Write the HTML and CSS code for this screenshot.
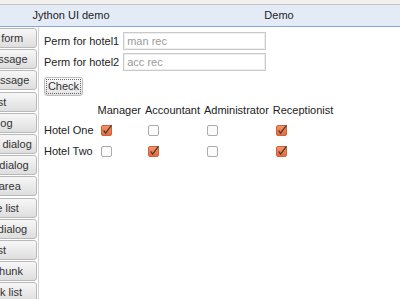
FILE: index.html
```
<!DOCTYPE html>
<html>
<head>
<meta charset="utf-8">
<link rel="stylesheet" href="styles.css">
</head>
<body>
<div class="topbar"></div>
<div class="header">
  <div class="hcell hleft">Jython UI demo</div>
  <div class="hcell hright">Demo</div>
</div>
<div class="main">
  <div class="sidebar">
    <button class="navbtn">Show simple form</button>
    <button class="navbtn">Show info message</button>
    <button class="navbtn">Show alert message</button>
    <button class="navbtn">Sample list</button>
    <button class="navbtn">Simple dialog</button>
    <button class="navbtn">Show question dialog</button>
    <button class="navbtn">Show custom dialog</button>
    <button class="navbtn">Show a text area</button>
    <button class="navbtn">Show simple list</button>
    <button class="navbtn">Show yes/no dialog</button>
    <button class="navbtn">Show a list</button>
    <button class="navbtn">Show a big chunk</button>
    <button class="navbtn">Show a check list</button>
  </div>
  <div class="content">
    <div class="formrow">
      <span class="lbl">Perm for hotel1</span>
      <input class="field" type="text" value="man rec">
    </div>
    <div class="formrow">
      <span class="lbl">Perm for hotel2</span>
      <input class="field" type="text" value="acc rec">
    </div>
    <button class="checkbtn"><span class="focusring">Check</span></button>
    <table class="grid">
      <tr class="headrow">
        <td></td><td>Manager</td><td>Accountant</td><td>Administrator</td><td>Receptionist</td>
      </tr>
      <tr class="datarow">
        <td>Hotel One</td>
        <td><svg class="cb" width="12" height="12" viewBox="0 0 12 12"><defs><linearGradient id="og" x1="0" y1="0" x2="0" y2="1"><stop offset="0" stop-color="#f5946a"/><stop offset="1" stop-color="#e8683a"/></linearGradient></defs><rect x="0.5" y="1.5" width="10" height="10" rx="1.5" fill="url(#og)" stroke="#c9643c"/><path d="M2.6 6.4 L4.6 9.2 L10.6 1.2" fill="none" stroke="#4a3b33" stroke-width="1.3"/></svg></td>
        <td><svg class="cb" width="12" height="12" viewBox="0 0 12 12"><rect x="0.5" y="1.5" width="10" height="10" rx="1.5" fill="#fbfbfb" stroke="#ababab"/></svg></td>
        <td><svg class="cb" width="12" height="12" viewBox="0 0 12 12"><rect x="0.5" y="1.5" width="10" height="10" rx="1.5" fill="#fbfbfb" stroke="#ababab"/></svg></td>
        <td><svg class="cb" width="12" height="12" viewBox="0 0 12 12"><rect x="0.5" y="1.5" width="10" height="10" rx="1.5" fill="url(#og)" stroke="#c9643c"/><path d="M2.6 6.4 L4.6 9.2 L10.6 1.2" fill="none" stroke="#4a3b33" stroke-width="1.3"/></svg></td>
      </tr>
      <tr class="datarow">
        <td>Hotel Two</td>
        <td><svg class="cb" width="12" height="12" viewBox="0 0 12 12"><rect x="0.5" y="1.5" width="10" height="10" rx="1.5" fill="#fbfbfb" stroke="#ababab"/></svg></td>
        <td><svg class="cb" width="12" height="12" viewBox="0 0 12 12"><rect x="0.5" y="1.5" width="10" height="10" rx="1.5" fill="url(#og)" stroke="#c9643c"/><path d="M2.6 6.4 L4.6 9.2 L10.6 1.2" fill="none" stroke="#4a3b33" stroke-width="1.3"/></svg></td>
        <td><svg class="cb" width="12" height="12" viewBox="0 0 12 12"><rect x="0.5" y="1.5" width="10" height="10" rx="1.5" fill="#fbfbfb" stroke="#ababab"/></svg></td>
        <td><svg class="cb" width="12" height="12" viewBox="0 0 12 12"><rect x="0.5" y="1.5" width="10" height="10" rx="1.5" fill="url(#og)" stroke="#c9643c"/><path d="M2.6 6.4 L4.6 9.2 L10.6 1.2" fill="none" stroke="#4a3b33" stroke-width="1.3"/></svg></td>
      </tr>
    </table>
  </div>
</div>
</body>
</html>
```
FILE: styles.css
```
html, body {
  margin: 0;
  padding: 0;
  background: #ffffff;
  font-family: "Liberation Sans", Arial, sans-serif;
  font-size: 11px;
  color: #222;
  overflow: hidden;
}
.topbar {
  height: 4px;
  background: #f1f0ef;
  border-bottom: 1px solid #c4c4c4;
}
.header {
  display: grid;
  grid-template-columns: 142px 274px;
  height: 21px;
  background: #e3ebf7;
  border-bottom: 1px solid #8aa4d6;
  overflow: hidden;
}
.hcell {
  line-height: 21px;
  text-align: center;
  white-space: nowrap;
}
.main {
  display: flex;
  height: 272px;
}
.sidebar {
  width: 38px;
  flex: none;
  border-right: 1px solid #d2d2d2;
  overflow: hidden;
  padding-top: 1px;
}
.navbtn {
  display: block;
  box-sizing: border-box;
  width: 115px;
  height: 20px;
  margin: 0 0 1.2px -78px;
  padding: 0;
  border: 1px solid #b9b9b9;
  border-radius: 3px;
  background: linear-gradient(#f7f7f7, #dedede);
  font-family: "Liberation Sans", Arial, sans-serif;
  font-size: 11px;
  color: #333;
  text-align: center;
  white-space: nowrap;
}
.content {
  padding: 5px 0 0 5px;
}
.formrow {
  display: flex;
  align-items: center;
  gap: 4px;
  margin-bottom: 3px;
}
.lbl {
  white-space: nowrap;
}
.field {
  box-sizing: border-box;
  width: 143px;
  height: 18px;
  margin: 0;
  padding: 0 3px;
  border: 1px solid #c9c9c9;
  box-shadow: inset 0 0 0 1px #efefef;
  font-family: "Liberation Sans", Arial, sans-serif;
  font-size: 11px;
  color: #9a9a9a;
  background: #fff;
  outline: none;
}
.checkbtn {
  display: block;
  box-sizing: border-box;
  height: 19px;
  width: 39px;
  margin: 6px 0 0 0;
  padding: 0;
  border: 1px solid #bdbdbd;
  border-radius: 3px;
  background: linear-gradient(#fafafa, #e3e3e3);
  font-family: "Liberation Sans", Arial, sans-serif;
  font-size: 11px;
  color: #333;
}
.focusring {
  display: inline-block;
  border: 1px dotted #666;
  padding: 0 1px;
  line-height: 13px;
}
.grid {
  border-collapse: collapse;
  border-spacing: 0;
  margin-top: 5px;
}
.grid td {
  padding: 0 2px;
  white-space: nowrap;
  vertical-align: middle;
}
.grid td:first-child {
  padding-left: 0;
}
.headrow td {
  height: 18px;
}
.datarow td {
  height: 21px;
}
.cb {
  display: block;
  margin-left: 3px;
}
```
